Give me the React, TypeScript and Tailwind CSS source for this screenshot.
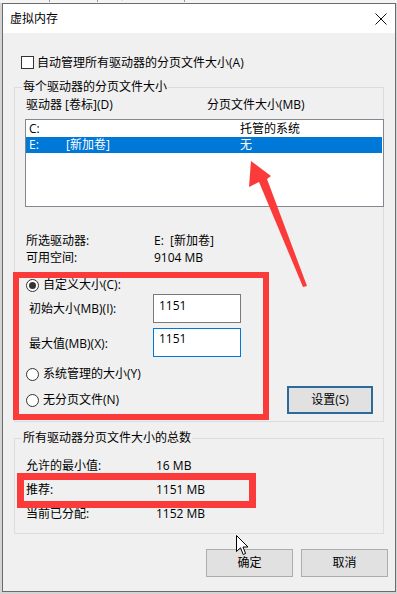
import React from "react";

const font = { fontFamily: '"Open Sans", "Noto Sans CJK SC", sans-serif' };

function Radio({ checked }: { checked?: boolean }) {
  return (
    <span className="w-[13px] h-[13px] rounded-full border border-[#333333] bg-white flex items-center justify-center shrink-0">
      {checked ? <span className="w-[7px] h-[7px] rounded-full bg-[#333333]" /> : null}
    </span>
  );
}

export default function App() {
  return (
    <div
      className="relative w-[397px] h-[594px] overflow-hidden bg-[#d4d4d4] text-[12px] leading-[16px] text-black"
      style={font}
    >
      {/* background window strip */}
      <div className="h-[3px] overflow-hidden bg-[#f4f4f4]">
        <div className="flex mt-[-12px] text-[12px] leading-[14px] text-[#222]">
          <span className="w-[50px] pl-[2px] border-r border-[#999]">管效果</span>
          <span className="w-[48px] pl-[6px] border-r border-[#999]">高级</span>
          <span className="pl-[6px] pr-[8px] border-r border-[#999]">数据执行保护</span>
        </div>
      </div>

      {/* dialog */}
      <div className="ml-[2px] w-[394px] h-[589px] border border-[#6b6b6b] bg-[#f0f0f0] flex flex-col">
        <div className="h-[29px] bg-white flex items-center justify-between pl-[7px] pr-[8px] shrink-0">
          <span>虚拟内存</span>
          <svg width="12" height="12" viewBox="0 0 12 12">
            <path d="M0.5 0.5 L11.5 11.5 M11.5 0.5 L0.5 11.5" stroke="#111" strokeWidth="1" />
          </svg>
        </div>

        <div className="flex flex-col">
          {/* checkbox */}
          <div className="mt-[23px] pl-[18px] h-[13px] flex items-center gap-[3px]">
            <span className="w-[13px] h-[13px] border border-[#333333] bg-white shrink-0" />
            <span className="leading-[13px]">自动管理所有驱动器的分页文件大小(A)</span>
          </div>

          {/* group 1 */}
          <div className="relative mt-[18px] ml-[11px] w-[370px] h-[335px] border border-[#dcdcdc] flex flex-col">
            <span className="absolute left-[7px] top-[-9px] px-[1px] bg-[#f0f0f0]">每个驱动器的分页文件大小</span>
            <div className="mt-[9px] h-[16px] flex pl-[11px]">
              <span className="w-[181px]">驱动器 [卷标](D)</span>
              <span>分页文件大小(MB)</span>
            </div>
            <div className="mt-[6px] ml-[10px] w-[359px] h-[88px] border border-[#828790] bg-white pt-[1px] flex flex-col">
              <div className="h-[16px] flex items-center pl-[3px]">
                <span className="w-[37px]">C:</span>
                <span className="w-[174px]"></span>
                <span>托管的系统</span>
              </div>
              <div className="h-[16px] mr-[1px] flex items-center pl-[3px] bg-[#0078d7] text-white">
                <span className="w-[37px]">E:</span>
                <span className="w-[174px]">[新加卷]</span>
                <span>无</span>
              </div>
            </div>

            <div className="mt-[25px] pl-[11px] h-[17px] flex items-center">
              <span className="w-[128px]">所选驱动器:</span>
              <span>E:&nbsp;&nbsp;[新加卷]</span>
            </div>
            <div className="pl-[11px] h-[17px] flex items-center">
              <span className="w-[128px]">可用空间:</span>
              <span>9104 MB</span>
            </div>

            <div className="mt-[11px] pl-[11px] h-[16px] flex items-center gap-[4px]">
              <Radio checked />
              <span>自定义大小(C):</span>
            </div>
            <div className="mt-[1px] pl-[14px] h-[29px] flex items-center">
              <span className="w-[124px]">初始大小(MB)(I):</span>
              <div className="w-[88px] h-[29px] border border-[#7a7a7a] bg-white pl-[5px] pt-[3px]">1151</div>
            </div>
            <div className="mt-[5px] pl-[14px] h-[29px] flex items-center">
              <span className="w-[124px] pt-[3px]">最大值(MB)(X):</span>
              <div className="w-[88px] h-[29px] border border-[#0078d7] bg-white pl-[5px] pt-[2px]">1151</div>
            </div>
            <div className="mt-[9px] pl-[11px] flex items-start">
              <div className="w-[261px] flex flex-col gap-[10px]">
                <div className="h-[16px] flex items-center gap-[4px]">
                  <Radio />
                  <span>系统管理的大小(Y)</span>
                </div>
                <div className="h-[16px] flex items-center gap-[4px]">
                  <Radio />
                  <span>无分页文件(N)</span>
                </div>
              </div>
              <div className="mt-[20px] w-[86px] h-[28px] border-2 border-[#2c6a9a] bg-[#e1e1e1] flex items-center justify-center">
                设置(S)
              </div>
            </div>
          </div>

          {/* group 2 */}
          <div className="relative mt-[16px] ml-[11px] w-[370px] h-[96px] border border-[#dcdcdc] flex flex-col pt-[15px]">
            <span className="absolute left-[7px] top-[-9px] px-[1px] bg-[#f0f0f0]">所有驱动器分页文件大小的总数</span>
            <div className="pl-[11px] h-[24px] flex items-center">
              <span className="w-[130px]">允许的最小值:</span>
              <span>16 MB</span>
            </div>
            <div className="pl-[11px] h-[24px] flex items-center">
              <span className="w-[130px]">推荐:</span>
              <span>1151 MB</span>
            </div>
            <div className="pl-[11px] h-[24px] flex items-center">
              <span className="w-[130px]">当前已分配:</span>
              <span>1152 MB</span>
            </div>
          </div>

          {/* buttons */}
          <div className="mt-[15px] pr-[7px] flex justify-end gap-[8px]">
            <div className="w-[87px] h-[28px] border border-[#adadad] bg-[#e1e1e1] flex items-center justify-center">确定</div>
            <div className="w-[87px] h-[28px] border border-[#adadad] bg-[#e1e1e1] flex items-center justify-center">取消</div>
          </div>
        </div>
      </div>

      {/* red annotation boxes */}
      <div className="absolute left-[13px] top-[272px] w-[256px] h-[148px] border-[6px] border-[#fb3a3a] pointer-events-none" />
      <div className="absolute left-[17px] top-[473px] w-[239px] h-[35px] border-[7px] border-[#fb3a3a] pointer-events-none" />

      {/* red arrow */}
      <svg className="absolute left-0 top-0 pointer-events-none" width="397" height="594" viewBox="0 0 397 594">
        <polygon
          points="251,161 249,187 259,182 303,287 307,286 267,179 271,176"
          fill="#fb3a3a"
        />
      </svg>

      {/* mouse cursor */}
      <svg className="absolute left-[236px] top-[535px] pointer-events-none" width="13" height="21" viewBox="0 0 13 21">
        <path
          d="M0.5 0.5 L0.5 16.5 L4.5 12.8 L7.2 19.5 L9.6 18.5 L7 12 L12 12 Z"
          fill="#ffffff"
          stroke="#000000"
          strokeWidth="1"
          strokeLinejoin="miter"
        />
      </svg>
    </div>
  );
}
